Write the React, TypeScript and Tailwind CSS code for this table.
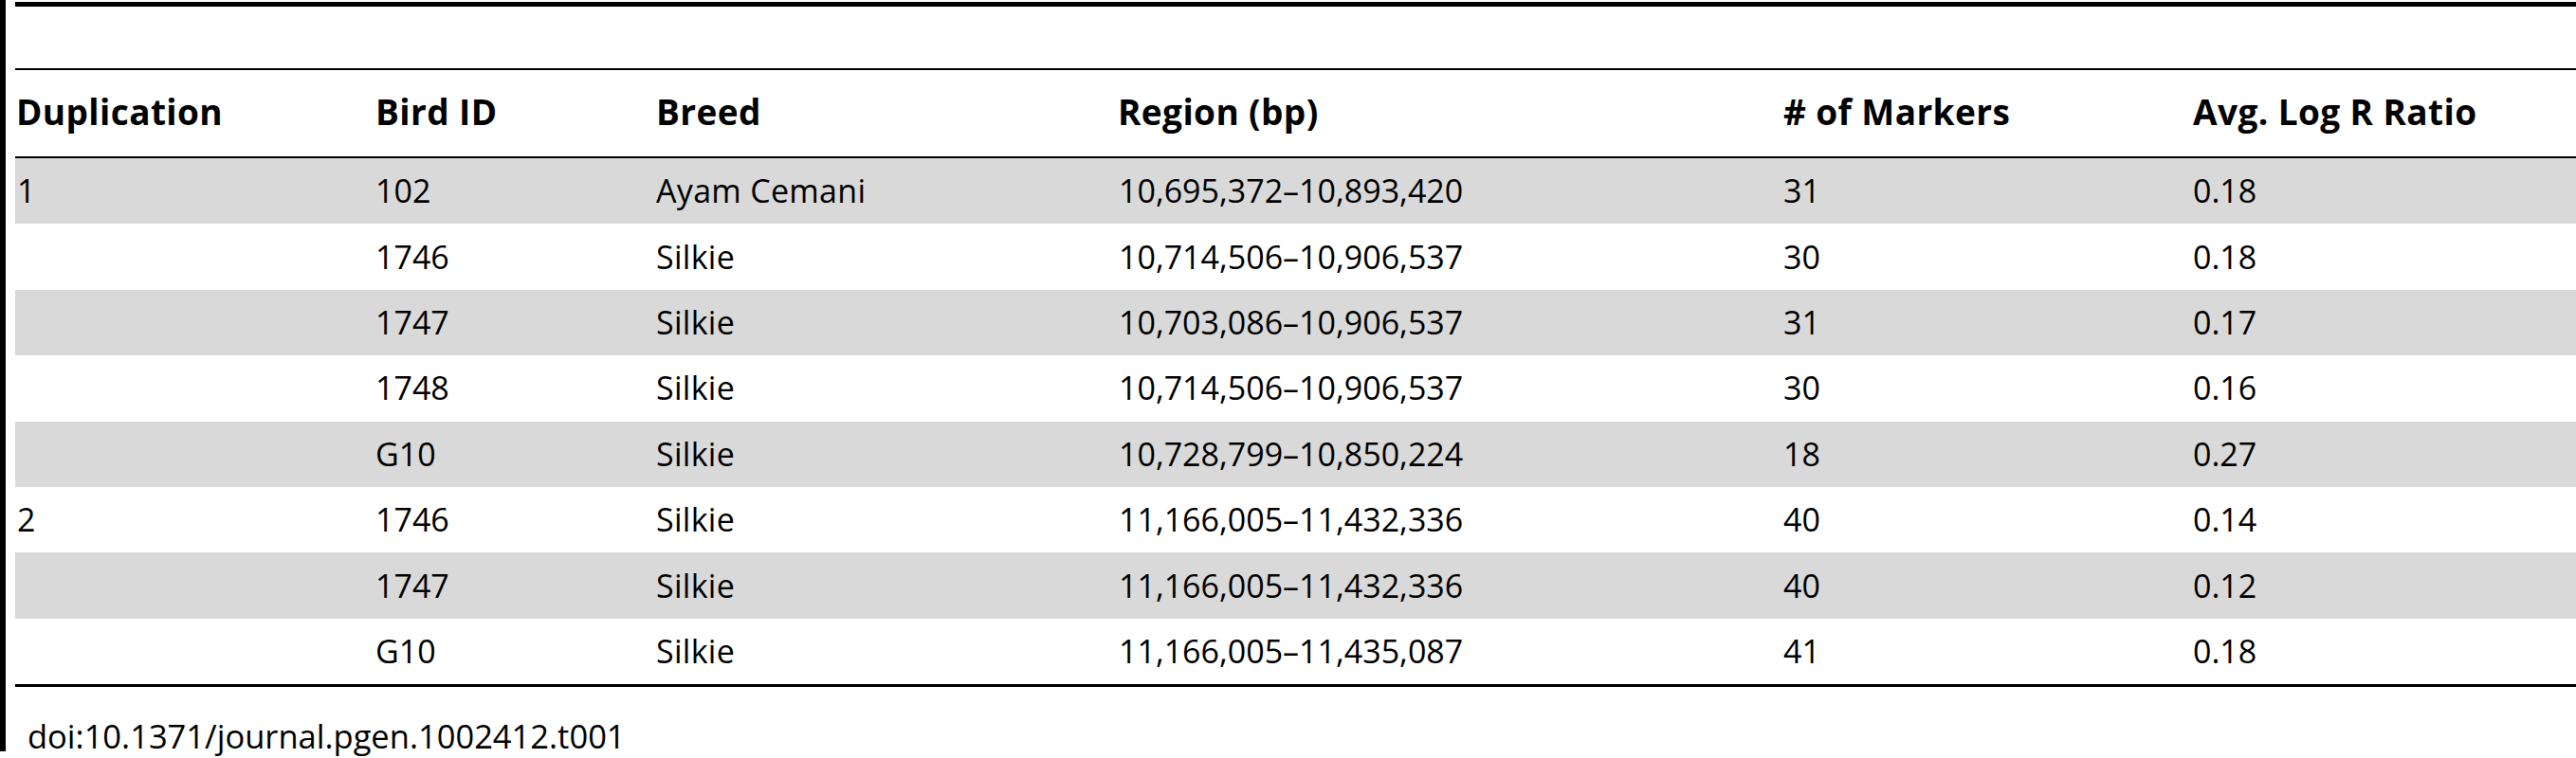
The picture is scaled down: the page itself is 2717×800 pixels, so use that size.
const ROWS = [
  { dup: "1", bird: "102", breed: "Ayam Cemani", region: "10,695,372–10,893,420", markers: "31", ratio: "0.18" },
  { dup: "", bird: "1746", breed: "Silkie", region: "10,714,506–10,906,537", markers: "30", ratio: "0.18" },
  { dup: "", bird: "1747", breed: "Silkie", region: "10,703,086–10,906,537", markers: "31", ratio: "0.17" },
  { dup: "", bird: "1748", breed: "Silkie", region: "10,714,506–10,906,537", markers: "30", ratio: "0.16" },
  { dup: "", bird: "G10", breed: "Silkie", region: "10,728,799–10,850,224", markers: "18", ratio: "0.27" },
  { dup: "2", bird: "1746", breed: "Silkie", region: "11,166,005–11,432,336", markers: "40", ratio: "0.14" },
  { dup: "", bird: "1747", breed: "Silkie", region: "11,166,005–11,432,336", markers: "40", ratio: "0.12" },
  { dup: "", bird: "G10", breed: "Silkie", region: "11,166,005–11,435,087", markers: "41", ratio: "0.18" },
];

const HEADERS = ["Duplication", "Bird ID", "Breed", "Region (bp)", "# of Markers", "Avg. Log R Ratio"];

const cols = "grid grid-cols-[379px_296px_487px_702px_432px_1fr] items-center";

export default function App() {
  return (
    <div className="flex h-[800px] w-full bg-white font-['Open_Sans',sans-serif] text-black">
      <div className="h-[793px] w-[6px] shrink-0 bg-black" />
      <div className="ml-[10px] flex-1 pt-[2px]">
        {/* caption space */}
        <div className="h-[70px] border-t-[5px] border-black" />

        {/* Header */}
        <div className={`${cols} h-[95px] border-y-2 border-black pb-[4px] text-[37px] font-bold tracking-[0.4px]`}>
          {HEADERS.map(h => (
            <div key={h} className="pl-[1px] whitespace-nowrap">{h}</div>
          ))}
        </div>

        {/* Body */}
        {ROWS.map((r, i) => (
          <div key={i} className={`${cols} h-[69.4px] text-[34px] ${i % 2 === 0 ? "bg-[#d9d9d9]" : ""}`}>
            <div className="pl-[2px]">{r.dup}</div>
            <div className="pl-[1px]">{r.bird}</div>
            <div className="pl-[1px] tracking-[0.3px]">{r.breed}</div>
            <div className="pl-[2px] whitespace-nowrap">{r.region}</div>
            <div className="pl-[1px]">{r.markers}</div>
            <div className="pl-[1px]">{r.ratio}</div>
          </div>
        ))}

        <div className="h-[3px] bg-black" />
        <div className="mt-[26px] pl-[13px] text-[34.5px]">doi:10.1371/journal.pgen.1002412.t001</div>
      </div>
    </div>
  );
}
